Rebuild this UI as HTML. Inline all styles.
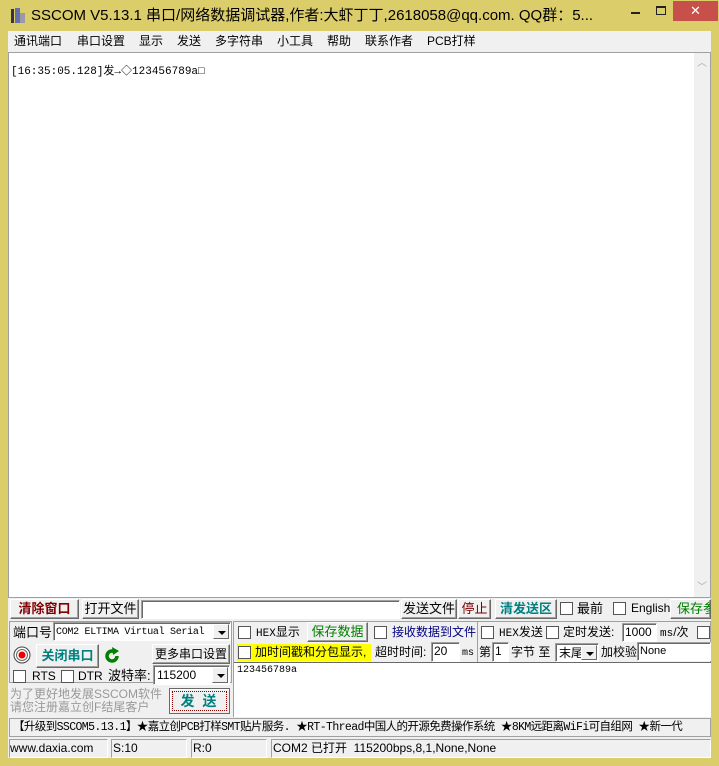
<!DOCTYPE html>
<html><head><meta charset="utf-8"><style>
*{margin:0;padding:0;box-sizing:border-box}
body{width:719px;height:766px;background:#dccd6b;position:relative;overflow:hidden;font-family:"Liberation Sans","Noto Sans CJK SC",sans-serif;font-size:12px;color:#000}
.a{position:absolute;white-space:nowrap;line-height:15px}
.btn{position:absolute;background:#f0f0f0;border:1px solid;border-color:#fff #696969 #696969 #fff;box-shadow:inset -1px -1px 0 #a0a0a0;text-align:center;white-space:nowrap;overflow:hidden}
.inp{position:absolute;background:#fff;border:1px solid;border-color:#a0a0a0 #fff #fff #a0a0a0;box-shadow:inset 1px 1px 0 #696969;white-space:nowrap;overflow:hidden;line-height:15px}
.cb{position:absolute;width:13px;height:13px;background:#fff;border:1px solid #555}
.dd{position:absolute;right:1px;top:1px;bottom:1px;width:16px;background:#f0f0f0;border:1px solid;border-color:#fff #696969 #696969 #fff}
.dd:after{content:"";position:absolute;left:4px;top:6px;border:4px solid transparent;border-top:4px solid #000;border-bottom:0}
.mono{font-family:"Liberation Mono","Noto Sans CJK SC",monospace}
</style></head><body>
<svg class="a" style="left:10px;top:8px" width="18" height="16"><rect x="1" y="1" width="3" height="14" fill="#334"/><rect x="5" y="0" width="5" height="15" fill="#6670a8"/><rect x="10" y="5" width="5" height="10" fill="#99a"/></svg>
<div class="a" style="left:31px;top:7px;font-size:15px;line-height:18px">SSCOM V5.13.1 串口/网络数据调试器,作者:大虾丁丁,2618058@qq.com. QQ群：5...</div>
<div class="a" style="left:631px;top:12px;width:9px;height:2px;background:#222"></div>
<div class="a" style="left:656px;top:6px;width:10px;height:9px;border:1px solid #222;border-top-width:2px"></div>
<div class="a" style="left:673px;top:1px;width:45px;height:20px;background:#c7504a;color:#fff;text-align:center;font-size:13px;line-height:20px">✕</div>
<div class="a" style="left:8px;top:31px;width:703px;height:21px;background:#f0f0f0"></div>
<div class="a" style="left:14px;top:34px">通讯端口</div>
<div class="a" style="left:77px;top:34px">串口设置</div>
<div class="a" style="left:139px;top:34px">显示</div>
<div class="a" style="left:177px;top:34px">发送</div>
<div class="a" style="left:215px;top:34px">多字符串</div>
<div class="a" style="left:277px;top:34px">小工具</div>
<div class="a" style="left:327px;top:34px">帮助</div>
<div class="a" style="left:365px;top:34px">联系作者</div>
<div class="a" style="left:427px;top:34px">PCB打样</div>
<div class="a" style="left:8px;top:52px;width:703px;height:546px;background:#fff;border:1px solid #a0a0a0"></div>
<div class="a mono" style="left:11px;top:65px;font-size:11px">[16:35:05.128]发→◇123456789a□</div>
<div class="a" style="left:694px;top:53px;width:16px;height:544px;background:#f0f0f0"></div>
<div class="a" style="left:697px;top:56px;color:#aaa;font-size:10px">︿</div>
<div class="a" style="left:697px;top:580px;color:#aaa;font-size:10px">﹀</div>
<div class="a" style="left:8px;top:598px;width:703px;height:160px;background:#f0f0f0"></div>
<div class="btn" style="left:10px;top:599px;width:69px;height:20px;color:#800000;font-weight:bold;font-size:13px;line-height:18px">清除窗口</div>
<div class="btn" style="left:82px;top:599px;width:57px;height:20px;font-size:13px;line-height:18px">打开文件</div>
<div class="inp" style="left:141px;top:600px;width:259px;height:19px"></div>
<div class="btn" style="left:401px;top:599px;width:56px;height:20px;font-size:13px;line-height:18px">发送文件</div>
<div class="btn" style="left:458px;top:599px;width:33px;height:20px;font-size:13px;line-height:18px;color:#800000">停止</div>
<div class="btn" style="left:495px;top:599px;width:62px;height:20px;font-size:13px;line-height:18px;color:#008080;font-weight:bold">清发送区</div>
<div class="cb" style="left:560px;top:602px"></div><div class="a" style="left:577px;top:601px;font-size:13px">最前</div>
<div class="cb" style="left:613px;top:602px"></div><div class="a" style="left:631px;top:601px">English</div>
<div class="btn" style="left:670px;top:599px;width:41px;height:20px;font-size:13px;line-height:18px;color:#008000;text-align:left;padding-left:6px">保存参数</div>
<div class="a" style="left:9px;top:621px;width:223px;height:62px;border:1px solid #a0a0a0"></div>
<div class="a" style="left:13px;top:625px;font-size:13px">端口号</div>
<div class="inp mono" style="left:53px;top:622px;width:178px;height:19px;font-size:10px;padding:2px 0 0 2px;letter-spacing:-0.3px">COM2 ELTIMA Virtual Serial<div class="dd"></div></div>
<svg class="a" style="left:13px;top:646px" width="18" height="18"><circle cx="9" cy="9" r="8" fill="#fff" stroke="#444"/><circle cx="9" cy="9" r="5.5" fill="none" stroke="#666"/><circle cx="9" cy="9" r="3.5" fill="#e00"/></svg>
<div class="btn" style="left:36px;top:644px;width:63px;height:24px;color:#008080;font-weight:bold;font-size:13px;line-height:22px">关闭串口</div>
<svg class="a" style="left:103px;top:647px" width="18" height="18"><path d="M14 9a5 5 0 1 1-3-4.6" fill="none" stroke="#008000" stroke-width="3.5"/><path d="M9 0l7 4-6 4z" fill="#008000"/></svg>
<div class="btn" style="left:152px;top:644px;width:78px;height:20px;font-size:12px;line-height:18px">更多串口设置</div>
<div class="cb" style="left:13px;top:670px"></div><div class="a" style="left:32px;top:669px">RTS</div>
<div class="cb" style="left:61px;top:670px"></div><div class="a" style="left:78px;top:669px">DTR</div>
<div class="a" style="left:108px;top:668px;font-size:13px">波特率:</div>
<div class="inp" style="left:153px;top:665px;width:77px;height:20px;padding:2px 0 0 3px">115200<div class="dd"></div></div>
<div class="a" style="left:10px;top:688px;color:#999;line-height:13px">为了更好地发展SSCOM软件<br>请您注册嘉立创F结尾客户</div>
<div class="btn" style="left:169px;top:688px;width:61px;height:26px;border-color:#696969;box-shadow:inset 1px 1px 0 #fff"><div style="margin:2px;height:20px;border:1px dotted #800;color:#008080;font-weight:bold;font-size:14px;line-height:18px;letter-spacing:8px;padding-left:6px">发送</div></div>
<div class="a" style="left:233px;top:621px;width:478px;height:96px;border:1px solid #a0a0a0"></div>
<div class="cb" style="left:238px;top:626px"></div><div class="a" style="left:256px;top:625px"><span class="mono" style="font-size:11px">HEX</span>显示</div>
<div class="btn" style="left:307px;top:622px;width:61px;height:20px;color:#008000;font-size:13px;line-height:18px">保存数据</div>
<div class="cb" style="left:374px;top:626px"></div><div class="a" style="left:392px;top:625px;color:#000080">接收数据到文件</div>
<div class="a" style="left:477px;top:622px;width:1px;height:40px;background:#a0a0a0"></div>
<div class="cb" style="left:481px;top:626px"></div><div class="a" style="left:499px;top:625px"><span class="mono" style="font-size:11px">HEX</span>发送</div>
<div class="cb" style="left:546px;top:626px"></div><div class="a" style="left:563px;top:625px">定时发送:</div>
<div class="inp" style="left:622px;top:623px;width:35px;height:19px;padding:1px 2px">1000</div>
<div class="a" style="left:660px;top:625px"><span class="mono" style="font-size:11px">ms</span>/次</div>
<div class="cb" style="left:697px;top:626px"></div>
<div class="a" style="left:237px;top:644px;width:134px;height:17px;background:#ff0"></div>
<div class="cb" style="left:238px;top:646px"></div><div class="a" style="left:255px;top:645px">加时间戳和分包显示,</div>
<div class="a" style="left:375px;top:645px">超时时间:</div>
<div class="inp" style="left:431px;top:642px;width:29px;height:20px;padding:1px 2px">20</div>
<div class="a mono" style="left:462px;top:646px;font-size:10px">ms</div>
<div class="a" style="left:479px;top:645px">第</div>
<div class="inp" style="left:492px;top:642px;width:17px;height:20px;padding:1px 2px">1</div>
<div class="a" style="left:511px;top:645px">字节 至</div>
<div class="inp" style="left:555px;top:643px;width:44px;height:19px;padding:2px 3px">末尾<div class="dd"></div></div>
<div class="a" style="left:601px;top:645px">加校验</div>
<div class="inp" style="left:637px;top:642px;width:74px;height:19px;font-size:11px;padding:1px 2px">None</div>
<div class="a" style="left:234px;top:662px;width:477px;height:55px;background:#fff;border-top:1px solid #696969"></div>
<div class="a mono" style="left:237px;top:663px;font-size:10px">123456789a</div>
<div class="a" style="left:9px;top:718px;width:702px;height:19px;border:1px solid #a0a0a0;background:#f0f0f0"></div>
<div class="a mono" style="left:13px;top:720px;font-size:11.5px;letter-spacing:-0.6px">【升级到SSCOM5.13.1】★嘉立创PCB打样SMT贴片服务. ★RT-Thread中国人的开源免费操作系统 ★8KM远距离WiFi可自组网 ★新一代</div>
<div class="a" style="left:9px;top:739px;width:99px;height:19px;border:1px solid;border-color:#a0a0a0 #fff #fff #a0a0a0"></div>
<div class="a" style="left:10px;top:741px">www.daxia.com</div>
<div class="a" style="left:111px;top:739px;width:76px;height:19px;border:1px solid;border-color:#a0a0a0 #fff #fff #a0a0a0"></div>
<div class="a" style="left:113px;top:741px">S:10</div>
<div class="a" style="left:191px;top:739px;width:76px;height:19px;border:1px solid;border-color:#a0a0a0 #fff #fff #a0a0a0"></div>
<div class="a" style="left:193px;top:741px">R:0</div>
<div class="a" style="left:271px;top:739px;width:440px;height:19px;border:1px solid;border-color:#a0a0a0 #fff #fff #a0a0a0"></div>
<div class="a" style="left:273px;top:741px">COM2 已打开&nbsp; 115200bps,8,1,None,None</div>
</body></html>
